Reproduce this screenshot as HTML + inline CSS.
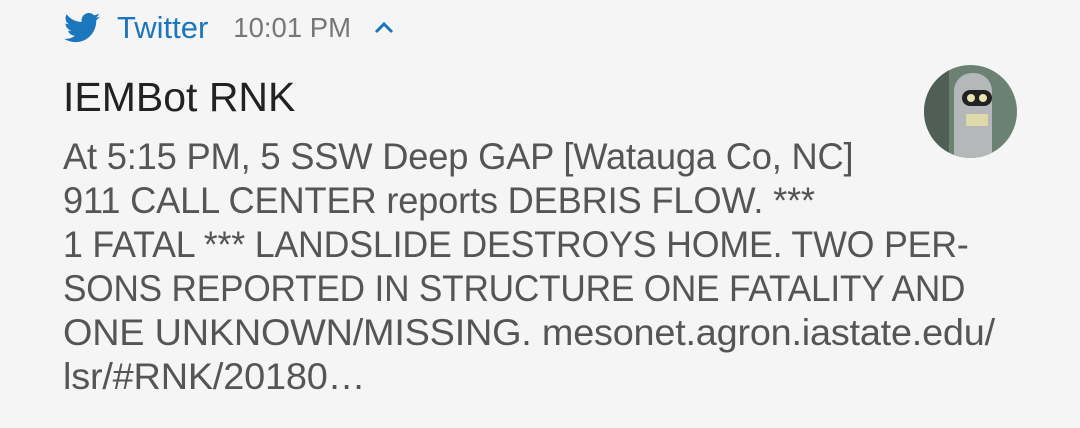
<!DOCTYPE html>
<html><head><style>
body{margin:0;width:1080px;height:428px;background:#f5f5f5;font-family:"Liberation Sans",Roboto,sans-serif;overflow:hidden;position:relative}
.hdr{position:absolute;top:10px;left:64px;height:36px;display:flex;align-items:center}
.tw{color:#1b76bc;margin-left:17px;font-size:31px}
.tm{color:#777;margin-left:25px;font-size:27.5px}
.title{position:absolute;left:63px;top:74px;font-size:41px;color:#222}
.body{position:absolute;left:63px;top:135px;font-size:37px;line-height:44px;color:#555;white-space:pre;letter-spacing:-0.2px}
.body div{transform-origin:0 0}
.av{position:absolute;left:924px;top:65px;width:93px;height:93px;border-radius:50%;background:#6b8272;overflow:hidden}
</style></head><body>
<div class="hdr">
<svg width="36" height="30" viewBox="0 0 24 20"><path fill="#1b76bc" d="M24 2.4a9.8 9.8 0 0 1-2.8.8A4.9 4.9 0 0 0 23.3.4a9.9 9.9 0 0 1-3.1 1.2A4.9 4.9 0 0 0 11.8 6 14 14 0 0 1 1.7.9a4.9 4.9 0 0 0 1.5 6.6A4.9 4.9 0 0 1 1 6.9a4.9 4.9 0 0 0 3.9 4.8 4.9 4.9 0 0 1-2.2.1 4.9 4.9 0 0 0 4.6 3.4A9.9 9.9 0 0 1 0 17.2 14 14 0 0 0 7.5 19.4c9.1 0 14-7.5 14-14v-.6A10 10 0 0 0 24 2.4z"/></svg>
<span class="tw">Twitter</span><span class="tm">10:01 PM</span>
<svg style="margin-left:22px" width="22" height="14" viewBox="0 0 22 14"><path d="M3 11 L11 3 L19 11" fill="none" stroke="#1b76bc" stroke-width="3"/></svg>
</div>
<div class="title">IEMBot RNK</div>
<div class="body"><div style="transform:scaleX(.981)">At 5:15 PM, 5 SSW Deep GAP [Watauga Co, NC]</div><div style="transform:scaleX(.98)">911 CALL CENTER reports DEBRIS FLOW. ***</div><div style="transform:scaleX(.966)">1 FATAL *** LANDSLIDE DESTROYS HOME. TWO PER-</div><div style="transform:scaleX(.951)">SONS REPORTED IN STRUCTURE ONE FATALITY AND</div><div style="transform:scaleX(1.022)">ONE UNKNOWN/MISSING. mesonet.agron.iastate.edu/</div><div style="transform:scaleX(1.024)">lsr/#RNK/20180…</div></div>
<div class="av">
<div style="position:absolute;left:0;top:0;width:25px;height:93px;background:#4f5f55"></div>
<div style="position:absolute;left:30px;top:8px;width:38px;height:90px;border-radius:18px 18px 4px 4px;background:#b5b8b8"></div>
<div style="position:absolute;left:38px;top:25px;width:30px;height:16px;border-radius:8px;background:#222"></div>
<div style="position:absolute;left:43px;top:29px;width:8px;height:8px;border-radius:50%;background:#e8e6b0"></div>
<div style="position:absolute;left:55px;top:29px;width:8px;height:8px;border-radius:50%;background:#e8e6b0"></div>
<div style="position:absolute;left:42px;top:49px;width:22px;height:12px;background:#ddd9a8"></div>
</div>
</body></html>
